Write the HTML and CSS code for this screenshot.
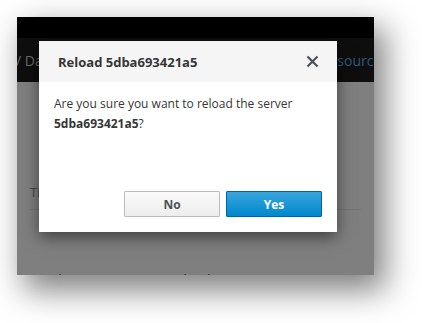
FILE: index.html
```html
<!DOCTYPE html>
<html lang="en">
<head>
    <meta charset="UTF-8">
    <title>Reload server</title>
    <link rel="stylesheet" href="styles.css">
</head>
<body>
    <div class="shot">
        <div class="topbar"></div>
        <div class="nav">
            <span class="crumbs">/ Dashboards</span>
            <span class="nav-link">Add Resources</span>
        </div>
        <div class="content">
            <div class="table-head">Time</div>
            <div class="table-row">10 (4) days ago &nbsp;&nbsp;&nbsp;&nbsp;&nbsp;&nbsp;&nbsp; 7 &nbsp;&nbsp;&nbsp;&nbsp;&nbsp;&nbsp;&nbsp; Cloud &nbsp;&nbsp;&nbsp;&nbsp;&nbsp;&nbsp;&nbsp;&nbsp;&nbsp; 1</div>
        </div>

        <div class="backdrop"></div>

        <div class="modal">
            <div class="modal-header">
                <h4>Reload 5dba693421a5</h4>
                <svg class="close" width="13" height="13" viewBox="0 0 13 13">
                    <path d="M1.5 1.5 L11.5 11.5 M11.5 1.5 L1.5 11.5" stroke="#4d5258" stroke-width="2.2" fill="none"/>
                </svg>
            </div>
            <div class="modal-body">
                Are you sure you want to reload the server <b>5dba693421a5</b>?
            </div>
            <div class="modal-footer">
                <button class="btn btn-default">No</button>
                <button class="btn btn-primary">Yes</button>
            </div>
        </div>
    </div>
</body>
</html>
```

FILE: styles.css
```css
html, body {
    height: 100%;
}
body {
    margin: 0;
    padding: 17px 0 0 17px;
    box-sizing: border-box;
    overflow: hidden;
    background: #fff;
    font-family: 'Open Sans', 'Noto Sans', sans-serif;
    color: #363636;
}
.shot {
    position: relative;
    width: 357px;
    height: 258px;
    overflow: hidden;
    background: #fff;
    box-shadow: 9px 13px 30px 2px rgba(0, 0, 0, 0.5);
}
.topbar {
    height: 21px;
    background: #000;
}
.nav {
    height: 44px;
    background: #1c1c1c;
    display: flex;
    align-items: center;
    justify-content: space-between;
    font-size: 14px;
    white-space: nowrap;
    overflow: hidden;
}
.crumbs {
    color: #d1d1d1;
    margin-left: -1px;
}
.crumbs::first-letter {
    color: #8b8d8f;
}
.nav-link {
    color: #5ab0e6;
    margin-right: -14px;
}
.content {
    padding: 0 13px;
    font-size: 13px;
}
.table-head {
    margin-top: 93px;
    padding: 7px 0;
    line-height: 20px;
    color: #8a8a8a;
    border-bottom: 1px solid #ebebeb;
}
.table-row {
    margin-top: 58.5px;
    margin-left: -13px;
    line-height: 20px;
    color: #444;
    white-space: nowrap;
}
.backdrop {
    position: absolute;
    inset: 0;
    background: rgba(0, 0, 0, 0.5);
}
.modal {
    position: absolute;
    left: 22px;
    top: 24px;
    width: 298px;
    height: 191px;
    background: #fff;
    box-shadow: 0 5px 15px rgba(0, 0, 0, 0.5);
    display: flex;
    flex-direction: column;
}
.modal-header {
    height: 41px;
    background: #f5f5f5;
    display: flex;
    align-items: center;
    justify-content: space-between;
    padding: 0 18px 0 19px;
}
.modal-header h4 {
    margin: 0;
    font-size: 13px;
    font-weight: 700;
    color: #363636;
}
.close {
    display: block;
}
.modal-body {
    padding: 12px 15px 0;
    font-size: 12px;
    line-height: 20px;
    color: #363636;
}
.modal-body b {
    font-weight: 700;
}
.modal-footer {
    margin-top: auto;
    padding: 0 15px 15px;
    display: flex;
    justify-content: flex-end;
    gap: 6px;
}
.btn {
    box-sizing: border-box;
    width: 96px;
    height: 26px;
    font-family: inherit;
    font-size: 12px;
    font-weight: 700;
    border-radius: 1px;
    padding: 0;
}
.btn-default {
    background: linear-gradient(#fafafa, #ededed);
    border: 1px solid #bbb;
    color: #4d5258;
}
.btn-primary {
    background: linear-gradient(#39a5dc, #0088ce);
    border: 1px solid #00659c;
    color: #fff;
}
```
